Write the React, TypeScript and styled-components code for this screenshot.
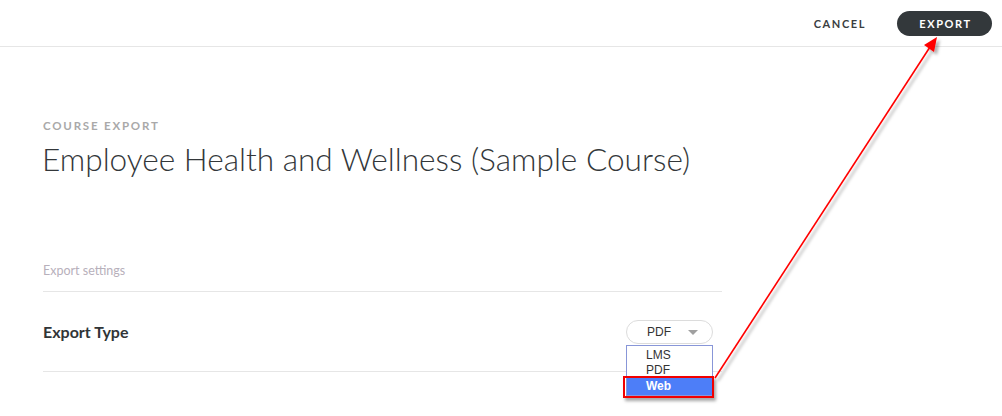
import React from "react";
import styled, { createGlobalStyle } from "styled-components";

const GlobalStyle = createGlobalStyle`
  html, body {
    margin: 0;
    padding: 0;
    background: #fff;
  }
  body {
    font-family: Lato, "Open Sans", sans-serif;
    color: #313537;
  }
`;

const Page = styled.div`
  position: relative;
  width: 1002px;
  height: 416px;
  overflow: hidden;
  background: #fff;
`;

const TopBar = styled.header`
  height: 46px;
  border-bottom: 1px solid #e6e6e6;
  display: flex;
  align-items: center;
  justify-content: flex-end;
  padding-right: 10px;
  gap: 31px;
`;

const TextButton = styled.button`
  background: none;
  border: none;
  font-family: Lato, sans-serif;
  font-weight: 700;
  font-size: 11px;
  letter-spacing: 1.6px;
  color: #3a3e41;
  padding: 0;
  cursor: pointer;
`;

const PillButton = styled.button`
  height: 25px;
  width: 95px;
  border: none;
  border-radius: 13px;
  background: #33383b;
  color: #fff;
  font-family: Lato, sans-serif;
  font-weight: 700;
  font-size: 11px;
  letter-spacing: 1.6px;
  padding: 0 0 0 2px;
  cursor: pointer;
`;

const Content = styled.main`
  width: 679px;
  margin-left: 43px;
  padding-top: 72px;
`;

const Eyebrow = styled.div`
  font-weight: 700;
  font-size: 11.5px;
  line-height: 14px;
  letter-spacing: 1.8px;
  color: #a9a9a9;
`;

const Title = styled.h1`
  margin: 7px 0 0 -1px;
  font-weight: 300;
  font-size: 31.6px;
  line-height: 38px;
  color: #33373a;
`;

const SectionLabel = styled.div`
  margin-top: 85px;
  padding-bottom: 12px;
  font-size: 12.5px;
  line-height: 16px;
  color: #b7b0bb;
  border-bottom: 1px solid #e6e6e6;
`;

const SettingRow = styled.div`
  height: 79px;
  display: flex;
  align-items: center;
  justify-content: space-between;
  border-bottom: 1px solid #e6e6e6;
`;

const SettingName = styled.div`
  font-weight: 700;
  font-size: 16px;
  color: #313537;
`;

const SelectWrap = styled.div`
  position: relative;
  margin-right: 9px;
`;

const SelectBox = styled.div`
  width: 87px;
  height: 24px;
  box-sizing: border-box;
  border: 1px solid #dcdcdc;
  border-radius: 12px;
  display: flex;
  align-items: center;
  padding-left: 20px;
  gap: 17px;
  font-family: "Liberation Sans", Arial, sans-serif;
  font-size: 12px;
  color: #333;
  background: #fff;
`;

const Caret = styled.span`
  width: 0;
  height: 0;
  border-left: 5px solid transparent;
  border-right: 5px solid transparent;
  border-top: 5px solid #a0a0a0;
  margin-top: 1px;
`;

const OptionList = styled.ul`
  position: absolute;
  top: 25px;
  left: 0;
  width: 87px;
  box-sizing: border-box;
  margin: 0;
  padding: 2px 0 0;
  list-style: none;
  border: 1px solid #8896d8;
  background: #fff;
  z-index: 2;
  font-family: "Liberation Sans", Arial, sans-serif;
  font-size: 12px;
`;

const Option = styled.li<{ $active?: boolean }>`
  height: ${(p) => (p.$active ? 17 : 15)}px;
  line-height: ${(p) => (p.$active ? 17 : 15)}px;
  padding-left: 19px;
  color: ${(p) => (p.$active ? "#fff" : "#333")};
  background: ${(p) => (p.$active ? "#4d7ef8" : "transparent")};
  font-weight: ${(p) => (p.$active ? 700 : 400)};
`;

const Highlight = styled.div`
  position: absolute;
  left: -3px;
  top: 56px;
  width: 91px;
  height: 22px;
  box-sizing: border-box;
  border: 2px solid #f20000;
  box-shadow: 2px 3px 3px rgba(0, 0, 0, 0.35);
  z-index: 3;
`;

const Annotation = styled.svg`
  position: absolute;
  left: 0;
  top: 0;
  pointer-events: none;
  z-index: 4;
`;

export default function App() {
  return (
    <Page>
      <GlobalStyle />
      <TopBar>
        <TextButton>CANCEL</TextButton>
        <PillButton>EXPORT</PillButton>
      </TopBar>
      <Content>
        <Eyebrow>COURSE EXPORT</Eyebrow>
        <Title>Employee Health and Wellness (Sample Course)</Title>
        <SectionLabel>Export settings</SectionLabel>
        <SettingRow>
          <SettingName>Export Type</SettingName>
          <SelectWrap>
            <SelectBox>
              PDF
              <Caret />
            </SelectBox>
            <OptionList>
              <Option>LMS</Option>
              <Option>PDF</Option>
              <Option $active>Web</Option>
            </OptionList>
            <Highlight />
          </SelectWrap>
        </SettingRow>
      </Content>
      <Annotation width="1002" height="416" viewBox="0 0 1002 416">
        <defs>
          <filter id="shadow" x="-20%" y="-20%" width="140%" height="140%">
            <feDropShadow dx="3" dy="3" stdDeviation="1.5" floodColor="#000" floodOpacity="0.3" />
          </filter>
        </defs>
        <g filter="url(#shadow)">
          <line x1="715" y1="378" x2="930" y2="47" stroke="#f00" strokeWidth="1.6" />
          <polygon points="937,37 924,45 934,52" fill="#f00" />
        </g>
      </Annotation>
    </Page>
  );
}
